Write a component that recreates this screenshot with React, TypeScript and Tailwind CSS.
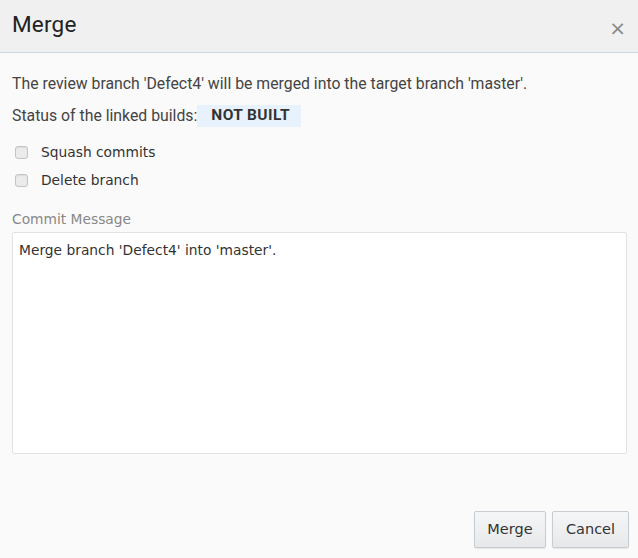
import React from "react";

export default function App() {
    return (
        <div className="w-[638px] h-[558px] bg-[#fafafa] flex flex-col" style={{ fontFamily: "Roboto, 'Liberation Sans', sans-serif" }}>
            <div className="h-[53px] shrink-0 bg-[#f0f0f0] border-b border-[#c9d7e3] flex items-center justify-between pl-3 pr-[12px]">
                <h1 className="text-[22.5px] text-[#222] pb-[3px] tracking-[0.2px]">Merge</h1>
                <button className="text-[#888] text-[20px] leading-none font-['DejaVu_Sans',sans-serif] pt-[4px]">×</button>
            </div>

            <div className="flex-1 flex flex-col pl-3 pr-[9px] pt-[21px]">
                <p className="text-[15.8px] text-[#444] leading-[20px]">The review branch 'Defect4' will be merged into the target branch 'master'.</p>
                <div className="flex items-center mt-[10px] text-[15.8px] text-[#444]">
                    <span>Status of the linked builds:</span>
                    <span className="pl-[14px] pr-[11px] h-[22px] flex items-center bg-[#e8f2fc] font-bold text-[#333] text-[15.5px] tracking-[0.4px]">NOT BUILT</span>
                </div>

                <div className="mt-[16px] flex flex-col gap-[10px] font-['DejaVu_Sans',sans-serif] text-[13.8px] text-[#333]">
                    <label className="flex items-center gap-[13px] pl-[3px] h-[18px]">
                        <span className="w-[13px] h-[13px] rounded-[3px] border border-[#c4c4c4] bg-[#ebebeb] shadow-[inset_0_1px_1px_rgba(0,0,0,0.06)]"></span>
                        Squash commits
                    </label>
                    <label className="flex items-center gap-[13px] pl-[3px] h-[18px]">
                        <span className="w-[13px] h-[13px] rounded-[3px] border border-[#c4c4c4] bg-[#ebebeb] shadow-[inset_0_1px_1px_rgba(0,0,0,0.06)]"></span>
                        Delete branch
                    </label>
                </div>

                <div className="mt-[20px] font-['DejaVu_Sans',sans-serif] text-[13.8px] leading-[18px] text-[#888]">Commit Message</div>
                <div className="mt-[4px] h-[222px] w-[615px] border border-[#e2e2e2] bg-white px-[6px] py-[7px] font-['DejaVu_Sans',sans-serif] text-[13.8px] text-[#333] rounded-[2px]">
                    Merge branch 'Defect4' into 'master'.
                </div>

                <div className="mt-auto mb-[10px] flex justify-end gap-[6px] font-['DejaVu_Sans',sans-serif] text-[14.5px] text-[#333]">
                    <button className="w-[72px] h-[37px] rounded-[2px] border border-[#c8ccd0] bg-gradient-to-b from-[#f5f6f7] to-[#e6e8ea] shadow-[0_1px_1px_rgba(0,0,0,0.08)]">Merge</button>
                    <button className="w-[77px] h-[37px] rounded-[2px] border border-[#c8ccd0] bg-gradient-to-b from-[#f5f6f7] to-[#e6e8ea] shadow-[0_1px_1px_rgba(0,0,0,0.08)]">Cancel</button>
                </div>
            </div>
        </div>
    );
}
